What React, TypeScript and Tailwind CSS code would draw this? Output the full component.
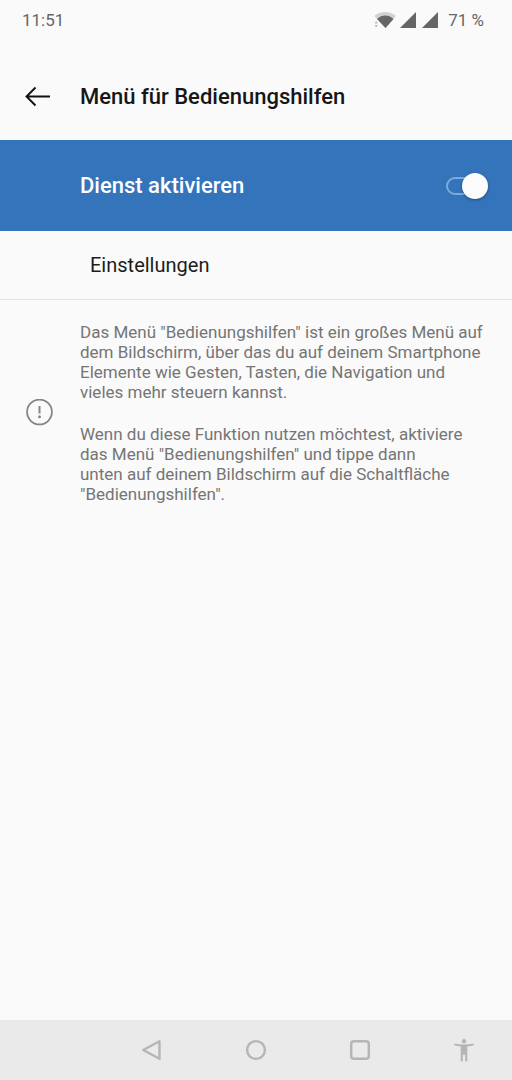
import { useState } from 'react';

function StatusBar() {
  return (
    <div className="h-10 flex items-center justify-between pl-[22px] pr-7 text-[17px] leading-5 text-[#666666]">
      <span>11:51</span>
      <div className="flex items-center gap-[10px]">
        <svg width="64" height="18" viewBox="0 0 64 18" aria-hidden="true">
          {/* Wi-Fi: outer arc faded, inner part filled */}
          <path d="M0.3 5 C6 -0.2 16 -0.2 22 5 L11.5 17 L3 8 Z" fill="#d2d2d2" />
          <path d="M3 8 C8 3.4 14.5 3.4 19.5 8 L11.5 17 Z" fill="#666666" />
          <path d="M2.2 10 L3.7 12.4 H0.7 Z M2.2 16.4 L3.7 14 H0.7 Z" fill="#b5b5b5" />
          <path d="M42 1 V17 H26 Z" fill="#666666" />
          <path d="M64 1 V17 H48 Z" fill="#666666" />
        </svg>
        <span>71 %</span>
      </div>
    </div>
  );
}

function NavBar() {
  return (
    <nav className="h-[60px] flex items-center justify-between bg-[#eaeaea] pl-[141px] pr-[37px] text-[#b5b5b5]">
      <button aria-label="Zurück">
        <svg width="22" height="22" viewBox="0 0 22 22" fill="none" stroke="currentColor" strokeWidth="2.4" strokeLinejoin="round">
          <path d="M18.5 2.2 V19.8 L2.2 11 Z" />
        </svg>
      </button>
      <button aria-label="Startseite">
        <svg width="22" height="22" viewBox="0 0 22 22" fill="none" stroke="currentColor" strokeWidth="2.4">
          <circle cx="11" cy="11" r="8.9" />
        </svg>
      </button>
      <button aria-label="Übersicht">
        <svg width="22" height="22" viewBox="0 0 22 22" fill="none" stroke="currentColor" strokeWidth="2.4">
          <rect x="2.2" y="2.2" width="17.6" height="17.6" rx="2.8" />
        </svg>
      </button>
      <button aria-label="Bedienungshilfen">
        <svg width="22" height="24" viewBox="0 0 22 24" fill="currentColor">
          <circle cx="11" cy="3.2" r="2.2" />
          <path d="M1.6 5.4 Q11 7.4 20.4 5.4 L20.8 7.3 Q17.6 8.2 14.3 8.4 V23.3 H12.2 V16.8 H9.8 V23.3 H7.7 V8.4 Q4.4 8.2 1.2 7.3 Z" />
        </svg>
      </button>
    </nav>
  );
}

export default function App() {
  const [enabled, setEnabled] = useState(true);

  return (
    <div className="min-h-screen flex flex-col bg-[#fafafa] font-[Roboto,sans-serif]">
      <StatusBar />

      <header className="h-[100px] flex items-center gap-7 px-6 pt-[14px]">
        <button aria-label="Zurück">
          <svg width="28" height="22" viewBox="0 0 28 22" fill="none" stroke="#111111" strokeWidth="1.9">
            <path d="M26 10.5 H3 M11.5 1.5 L2.5 10.5 L11.5 19.5" />
          </svg>
        </button>
        <h1 className="text-[22px] leading-7 font-medium text-[#161616]">Menü für Bedienungshilfen</h1>
      </header>

      <main className="flex-1">
        <label className="h-[91px] flex items-center justify-between bg-[#3474ba] pl-20 pr-6">
          <span className="text-[22px] leading-7 font-medium text-white">Dienst aktivieren</span>
          <span className="relative flex items-center w-[42px] h-[26px]">
            <input
              type="checkbox"
              role="switch"
              checked={enabled}
              onChange={(e) => setEnabled(e.target.checked)}
              className="peer appearance-none w-[34px] h-[18px] rounded-full border-2 border-[#7daadb]"
            />
            <span className="absolute left-0 top-0 size-[26px] rounded-full bg-[#fcfcfc] shadow-[0_1px_3px_rgba(0,0,0,0.35)] pointer-events-none peer-checked:left-4" />
          </span>
        </label>

        <button className="w-full h-[69px] pl-[90px] text-left text-[20px] leading-6 text-[#1c1c1c] border-b border-[#e2e2e2]">
          Einstellungen
        </button>

        <section className="flex items-center gap-[26px] pl-[26px] pr-5 pt-[22px]">
          <svg className="shrink-0" width="28" height="28" viewBox="0 0 28 28" fill="none" stroke="#868686" strokeWidth="1.8">
            <circle cx="13.5" cy="13" r="12.4" />
            <path d="M13.5 7 V14.5" strokeWidth="2" />
            <circle cx="13.5" cy="17.7" r="1.5" fill="#868686" stroke="none" />
          </svg>
          <div className="flex flex-col gap-[22px] text-[17px] leading-5 text-[#757575]">
            <p>
              Das Menü "Bedienungshilfen" ist ein großes Menü auf dem Bildschirm, über das du auf deinem Smartphone
              Elemente wie Gesten, Tasten, die Navigation und vieles mehr steuern kannst.
            </p>
            <p>
              Wenn du diese Funktion nutzen möchtest, aktiviere das Menü "Bedienungshilfen" und tippe dann
              <br />
              unten auf deinem Bildschirm auf die Schaltfläche "Bedienungshilfen".
            </p>
          </div>
        </section>
      </main>

      <NavBar />
    </div>
  );
}
